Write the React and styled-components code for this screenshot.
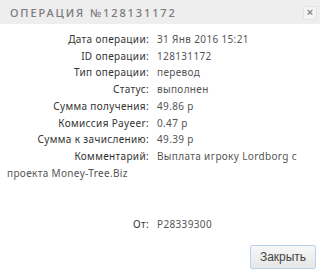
import styled, { createGlobalStyle } from 'styled-components';

const Global = createGlobalStyle`
  html, body { margin: 0; padding: 0; background: #fff; }
  body { font-family: "Noto Sans", "DejaVu Sans", sans-serif; }
`;

const rows = [
  ['Дата операции:', '31 Янв 2016 15:21'],
  ['ID операции:', '128131172'],
  ['Тип операции:', 'перевод'],
  ['Статус:', 'выполнен'],
  ['Сумма получения:', '49.86 р'],
  ['Комиссия Payeer:', '0.47 р'],
  ['Сумма к зачислению:', '49.39 р'],
  ['Комментарий:', 'Выплата игроку Lordborg с проекта Money-Tree.Biz'],
];

function App() {
  return (
    <Dialog>
      <Global />
      <Header>
        <Title>Операция №128131172</Title>
        <CloseX>×</CloseX>
      </Header>
      <Body>
        {rows.map(([k, v]) => (
          <Row key={k}>
            <Label>{k}</Label>
            <Value>{v}</Value>
          </Row>
        ))}
        <Row $gap={35}>
          <Label>От:</Label>
          <Value>P28339300</Value>
        </Row>
      </Body>
      <Footer>
        <Button>Закрыть</Button>
      </Footer>
    </Dialog>
  );
}

const Dialog = styled.div`
  width: 320px;
  height: 275px;
  background: #fff;
  display: flex;
  flex-direction: column;
`;

const Header = styled.div`
  height: 24px;
  background: #eeeeee;
  display: flex;
  align-items: center;
  justify-content: space-between;
  padding: 0 3px 0 10px;
`;

const Title = styled.div`
  font-size: 11px;
  letter-spacing: 1.9px;
  text-transform: uppercase;
  color: #7a7a7a;
  font-weight: 500;
  padding-top: 1px;
`;

const CloseX = styled.div`
  width: 12px;
  height: 12px;
  margin-top: 2px;
  border: 1px solid #e2e2e2;
  border-radius: 2px;
  background: #f4f4f4;
  color: #888;
  font-size: 11px;
  font-weight: bold;
  line-height: 11px;
  text-align: center;
  font-family: "Liberation Sans", sans-serif;
`;

const Body = styled.div`
  padding: 7px 0 0 7px;
  font-size: 10px;
  letter-spacing: 0.35px;
  color: #333;
`;

const Row = styled.div`
  line-height: 16.7px;
  margin-top: ${p => p.$gap || 0}px;
`;

const Label = styled.span`
  display: inline-block;
  width: 142px;
  text-align: right;
  color: #333;
`;

const Value = styled.span`
  margin-left: 8px;
  color: #555;
`;

const Footer = styled.div`
  margin-top: auto;
  display: flex;
  justify-content: flex-end;
  padding: 0 4px 6px 0;
`;

const Button = styled.button`
  width: 66px;
  height: 24px;
  border: 1px solid #b8d0ea;
  border-radius: 2px;
  background: linear-gradient(#f8f8f8, #e6e6e6);
  color: #444;
  font-family: "Liberation Sans", Arial, sans-serif;
  font-size: 12px;
  padding: 0;
`;

export default App;
